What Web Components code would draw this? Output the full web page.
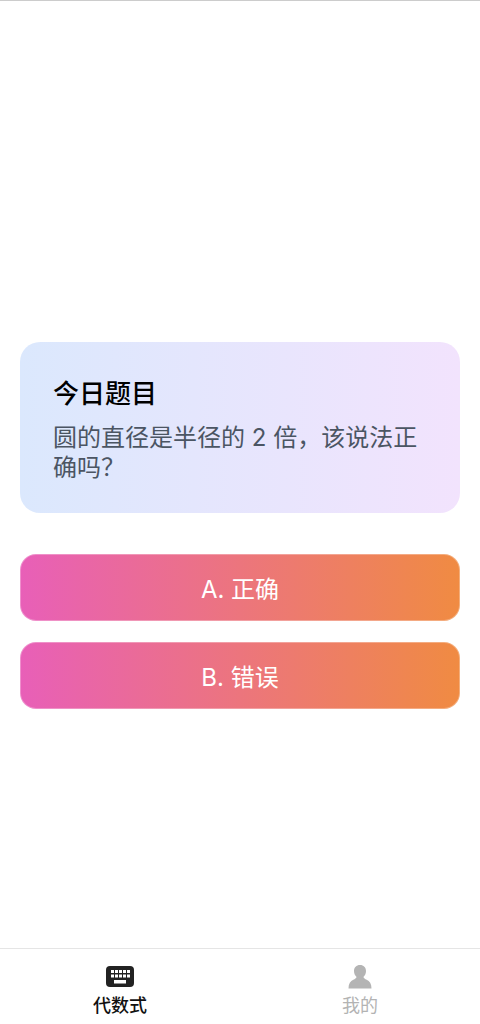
<!DOCTYPE html>
<html lang="zh-CN"><head><meta charset="utf-8"><style>
html,body{margin:0;padding:0;height:100%;background:#fff}
body{font-family:Inter,"Noto Sans CJK SC",sans-serif}
</style></head><body>
<quiz-app>
  <quiz-card heading="今日题目">圆的直径是半径的 2 倍，该说法正确吗？</quiz-card>
  <quiz-option>A. 正确</quiz-option>
  <quiz-option>B. 错误</quiz-option>
  <tab-item slot="tabs" active icon="keyboard">代数式</tab-item>
  <tab-item slot="tabs" icon="person">我的</tab-item>
</quiz-app>
<script>
function def(name,html,init){customElements.define(name,class extends HTMLElement{constructor(){super();this.attachShadow({mode:'open'}).innerHTML=html;}connectedCallback(){init&&init(this)}})}
def('quiz-app',`<style>
:host{display:flex;flex-direction:column;height:1024px;box-sizing:border-box;border-top:1px solid #ccc}
main{flex:1;min-height:0;display:flex;flex-direction:column;justify-content:flex-start;padding:341px 20px 0;box-sizing:border-box}
nav{display:flex;height:75px;border-top:1px solid #e5e5e5;box-sizing:content-box}
</style><main><slot></slot></main><nav><slot name="tabs"></slot></nav>`);
def('quiz-card',`<style>
:host{display:block;box-sizing:border-box;height:171px;padding:34px 33px 0;border-radius:20px;background:linear-gradient(90deg,#dbe8fd,#f2e3fd);margin-bottom:41px}
h2{margin:0 0 11px;font-size:26px;line-height:36px;font-weight:500;color:#000}
p{margin:0;font-size:24px;line-height:30px;color:#4b5563;font-weight:400}
</style><h2></h2><p><slot></slot></p>`,el=>{el.shadowRoot.querySelector('h2').textContent=el.getAttribute('heading')});
def('quiz-option',`<style>
:host{display:flex;align-items:center;justify-content:center;height:67px;margin-bottom:21px;box-sizing:border-box;border-radius:16px;background:linear-gradient(90deg,#e85fb8,#f08b42);background-origin:border-box;color:#fff;font-size:24px;font-weight:400;border:1px solid rgba(255,255,255,.3)}
</style><slot></slot>`);
const icons={keyboard:`<svg viewBox="0 0 30 24" width="30" height="24"><rect x="1" y="1" width="28" height="21" rx="4" fill="#222"/><g fill="#fff"><rect x="6" y="5" width="3" height="3"/><rect x="10" y="5" width="3" height="3"/><rect x="14" y="5" width="3" height="3"/><rect x="18" y="5" width="3" height="3"/><rect x="22" y="5" width="3" height="3"/><rect x="6" y="9.5" width="3" height="3"/><rect x="10" y="9.5" width="3" height="3"/><rect x="14" y="9.5" width="3" height="3"/><rect x="18" y="9.5" width="3" height="3"/><rect x="22" y="9.5" width="3" height="3"/><rect x="9" y="15" width="12" height="3.500"/></g></svg>`,
person:`<svg viewBox="0 0 30 24" width="30" height="24"><path d="M15 0c-3.600 0-6 2.400-6 6 0 2.600 1 4.600 2.600 6-.4 1.300-1.600 2-3.300 2.800C5.400 16 3.500 19 3.500 23.500h23c0-4.500-1.900-7.500-4.800-8.700-1.700-.8-2.900-1.500-3.300-2.800C20 10.600 21 8.600 21 6c0-3.600-2.400-6-6-6z" fill="#b4b4b4"/></svg>`};
def('tab-item',`<style>
:host{flex:1;display:flex;flex-direction:column;align-items:center;padding-top:16px;box-sizing:border-box;color:#b3b3b3;font-size:18px;line-height:26px;font-weight:400}
:host([active]){color:#111;font-weight:500}
.i{height:24px;display:block;margin-bottom:4px}
svg{display:block}
</style><span class="i"></span><slot></slot>`,el=>{el.shadowRoot.querySelector('.i').innerHTML=icons[el.getAttribute('icon')]});
</script></body></html>
